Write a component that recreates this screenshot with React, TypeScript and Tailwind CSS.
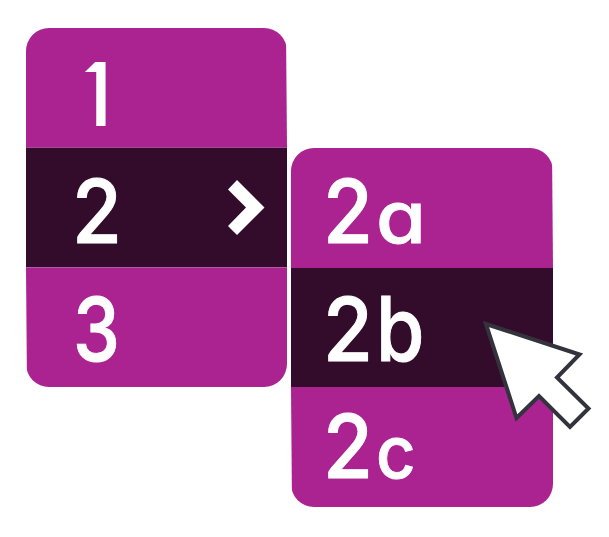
import type { ReactNode } from "react";

const glyph = "inline-block w-[53px] origin-[0_76px] font-['Inter',sans-serif] text-[88px] leading-[88px] text-white [font-feature-settings:'cv11'_1]";

function Row({ className, children }: { className: string; children: ReactNode }) {
  return <div className={`flex items-center ${className}`}>{children}</div>;
}

function Two() {
  return (
    <span className={`${glyph} scale-x-[0.92] font-medium [-webkit-text-stroke:1px_white] [clip-path:polygon(0_0,100%_0,100%_100%,1px_100%,1px_77px,10px_63px,0_45px)]`}>2</span>
  );
}

export default function App() {
  return (
    <main className="relative flex h-[537px] w-[609px] items-start gap-1 overflow-hidden bg-white pt-7 pl-[26px]">
      <section className="w-[261px]">
        <Row className="h-[120px] rounded-t-[23px] border-b border-[#a24a94] bg-[#ab2391] pt-[13px] pl-[56px] [clip-path:polygon(0_0,260px_0,100%_100%,0_100%)]">
          <span className={`${glyph} scale-x-[0.73] font-bold [clip-path:polygon(0_0,100%_0,100%_100%,19.5px_100%,19.5px_22px,0_22px)]`}>1</span>
        </Row>
        <Row className="h-[119px] justify-between bg-[#330c2b] pr-[22px] pl-[46px]">
          <div className="flex pt-[7px]"><Two /></div>
          <svg width="38" height="56" viewBox="0 0 38 56" fill="white"><path d="M10 0 37.5 27.5 10 55 1 46 19 27.5 1 9.5Z" /></svg>
        </Row>
        <Row className="h-[120px] rounded-b-[23px] border-t border-[#b45ba4] bg-[#ab2391] pt-[3px] pl-[47px] [clip-path:polygon(0_0,100%_0,100%_100%,1px_100%)]">
          <span className={`${glyph} scale-x-[0.85] font-medium [-webkit-text-stroke:1px_white]`}>3</span>
        </Row>
      </section>
      <section className="mt-[120px] w-[262px]">
        <Row className="h-[120px] rounded-t-[23px] bg-[#ab2391] pt-[6px] pl-[32px] [clip-path:polygon(0_0,261px_0,100%_100%,0_100%)]">
          <Two />
          <span className={`${glyph} scale-x-[0.92] scale-y-[0.82] font-medium [-webkit-text-stroke:1px_white]`}>a</span>
        </Row>
        <Row className="h-[119px] bg-[#330c2b] pt-[3px] pl-[32px]">
          <Two />
          <span className={`${glyph} scale-x-[0.89] scale-y-[1.01] font-medium [-webkit-text-stroke:1px_white]`}>b</span>
        </Row>
        <Row className="h-[120px] rounded-b-[23px] bg-[#ab2391] pb-[2px] pl-[32px] [clip-path:polygon(0_0,100%_0,100%_100%,1px_100%)]">
          <Two />
          <span className={`${glyph} scale-x-[0.78] scale-y-[0.82] font-medium [-webkit-text-stroke:1px_white]`}>c</span>
        </Row>
      </section>
      <svg className="absolute top-[316px] left-[478px]" width="118" height="118" viewBox="478 316 118 118">
        <path d="M486 324 579.5 354.5 557 377.5 588.5 408.5 570 427 539 396 516.5 418Z" fill="white" stroke="#33333d" strokeWidth="4" />
      </svg>
    </main>
  );
}
